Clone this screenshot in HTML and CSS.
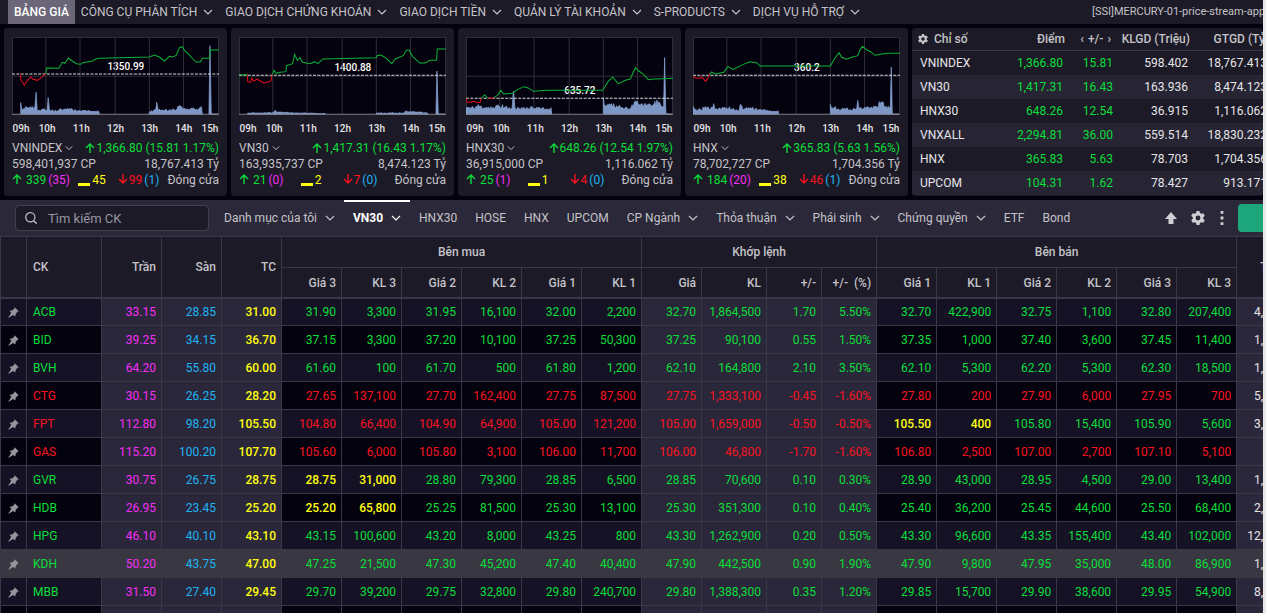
FILE: index.html
```html
<!DOCTYPE html>
<html lang="vi">
<head>
<meta charset="utf-8">
<title>Bảng giá</title>
<link rel="stylesheet" href="styles.css">
</head>
<body>
<svg class="sprite" aria-hidden="true">
  <symbol id="i-chevron" viewBox="0 0 10 10"><path d="M1 3l4 4 4-4" fill="none" stroke="currentColor" stroke-width="1.2"/></symbol>
  <symbol id="i-up" viewBox="0 0 10 10"><path d="M5 10V1M1 5l4-4 4 4" fill="none" stroke="currentColor" stroke-width="1.4"/></symbol>
  <symbol id="i-down" viewBox="0 0 10 10"><path d="M5 0v9M1 5l4 4 4-4" fill="none" stroke="currentColor" stroke-width="1.4"/></symbol>
  <symbol id="i-search" viewBox="0 0 12 12"><circle cx="5.3" cy="5.3" r="4.6" fill="none" stroke="currentColor" stroke-width="1.2"/><path d="M8.7 8.7l3 3" stroke="currentColor" stroke-width="1.3"/></symbol>
  <symbol id="i-gear" viewBox="0 0 24 24"><path fill="currentColor" fill-rule="evenodd" d="M9.5 0h5l.8 3.6 2.3 1.3L21 3.7l2.6 4.5-2.7 2.5v2.6l2.7 2.5-2.6 4.5-3.4-1.2-2.3 1.3-.8 3.6h-5l-.8-3.6-2.3-1.3L3 20.3.4 15.8l2.7-2.5v-2.6L.4 8.2 3 3.7l3.4 1.2 2.3-1.3zM12 7.800a4.200 4.200 0 1 0 0 8.400 4.200 4.200 0 0 0 0-8.400z"/></symbol>
  <symbol id="i-pin" viewBox="0 0 12 12"><path fill="currentColor" d="M7.300.3l4.400 4.400-1.200.5-2.200 2.500-.2 2.600-2.600-1.700L.7 11.800l-.4-.4L3.600 6.600 1.700 4.100l2.800-.3L6.900 1.700z"/></symbol>
  <symbol id="i-top" viewBox="0 0 12 12"><path fill="currentColor" d="M6 0l6 7H8.500v5h-5V7H0z"/></symbol>
  <symbol id="i-dots" viewBox="0 0 4 14"><path fill="currentColor" d="M.6 0h2.800v2.800H.6zM.6 5.600h2.800v2.800H.6zM.6 11.200h2.800V14H.6z"/></symbol>
</svg>

<div class="app">
  <header class="topbar">
    <nav class="menu">
      <a class="menu-item menu-active" href="#">BẢNG GIÁ</a>
      <a class="menu-item" href="#">CÔNG CỤ PHÂN TÍCH<svg class="chev"><use href="#i-chevron"/></svg></a>
      <a class="menu-item" href="#">GIAO DỊCH CHỨNG KHOÁN<svg class="chev"><use href="#i-chevron"/></svg></a>
      <a class="menu-item" href="#">GIAO DỊCH TIỀN<svg class="chev"><use href="#i-chevron"/></svg></a>
      <a class="menu-item" href="#">QUẢN LÝ TÀI KHOẢN<svg class="chev"><use href="#i-chevron"/></svg></a>
      <a class="menu-item" href="#">S-PRODUCTS<svg class="chev"><use href="#i-chevron"/></svg></a>
      <a class="menu-item" href="#">DỊCH VỤ HỖ TRỢ<svg class="chev"><use href="#i-chevron"/></svg></a>
    </nav>
    <span class="server">[SSI]MERCURY-01-price-stream-app</span>
  </header>

  <main>
    <section class="market">
      <div class="cards" id="cards"></div>
      <div class="indices">
        <table class="index-table">
          <colgroup><col class="w-name"><col class="w-point"><col class="w-change"><col class="w-vol"><col class="w-val"></colgroup>
          <thead>
            <tr><th class="left"><svg class="gear-sm"><use href="#i-gear"/></svg>Chỉ số</th><th>Điểm</th><th><span class="pager"><span>‹</span><span>+/-</span><span>›</span></span></th><th>KLGD (Triệu)</th><th>GTGD (Tỷ)</th></tr>
          </thead>
          <tbody>
            <tr><td class="left">VNINDEX</td><td class="up">1,366.80</td><td class="up">15.81</td><td>598.402</td><td>18,767.413</td></tr>
            <tr><td class="left">VN30</td><td class="up">1,417.31</td><td class="up">16.43</td><td>163.936</td><td>8,474.123</td></tr>
            <tr><td class="left">HNX30</td><td class="up">648.26</td><td class="up">12.54</td><td>36.915</td><td>1,116.062</td></tr>
            <tr><td class="left">VNXALL</td><td class="up">2,294.81</td><td class="up">36.00</td><td>559.514</td><td>18,830.232</td></tr>
            <tr><td class="left">HNX</td><td class="up">365.83</td><td class="up">5.63</td><td>78.703</td><td>1,704.356</td></tr>
            <tr><td class="left">UPCOM</td><td class="up">104.31</td><td class="up">1.62</td><td>78.427</td><td>913.171</td></tr>
          </tbody>
        </table>
      </div>
    </section>

    <section class="toolbar">
      <label class="search"><svg class="search-icon"><use href="#i-search"/></svg><input type="text" placeholder="Tìm kiếm CK" aria-label="Tìm kiếm CK"></label>
      <nav class="tabs">
        <button class="tab">Danh mục của tôi<svg class="chev"><use href="#i-chevron"/></svg></button>
        <button class="tab tab-active">VN30<svg class="chev"><use href="#i-chevron"/></svg></button>
        <button class="tab">HNX30</button>
        <button class="tab">HOSE</button>
        <button class="tab">HNX</button>
        <button class="tab">UPCOM</button>
        <button class="tab">CP Ngành<svg class="chev"><use href="#i-chevron"/></svg></button>
        <button class="tab">Thỏa thuận<svg class="chev"><use href="#i-chevron"/></svg></button>
        <button class="tab">Phái sinh<svg class="chev"><use href="#i-chevron"/></svg></button>
        <button class="tab">Chứng quyền<svg class="chev"><use href="#i-chevron"/></svg></button>
        <button class="tab">ETF</button>
        <button class="tab">Bond</button>
      </nav>
      <div class="tools">
        <button class="tool" aria-label="Lên đầu"><svg class="ic-top"><use href="#i-top"/></svg></button>
        <button class="tool" aria-label="Cài đặt"><svg class="ic-gear"><use href="#i-gear"/></svg></button>
        <button class="tool" aria-label="Thêm"><svg class="ic-dots"><use href="#i-dots"/></svg></button>
      </div>
      <button class="order" aria-label="Đặt lệnh"></button>
    </section>

    <table class="board">
      <colgroup>
        <col class="c-pin"><col class="c-code"><col span="3" class="c-60"><col span="6" class="c-60">
        <col class="c-60"><col class="c-65"><col span="2" class="c-55"><col span="6" class="c-60"><col>
      </colgroup>
      <thead>
        <tr class="h1">
          <th rowspan="2"></th><th rowspan="2" class="left">CK</th><th rowspan="2">Trần</th><th rowspan="2">Sàn</th><th rowspan="2">TC</th>
          <th colspan="6" class="group">Bên mua</th><th colspan="4" class="group">Khớp lệnh</th><th colspan="6" class="group">Bên bán</th>
          <th rowspan="2" class="total">T</th>
        </tr>
        <tr class="h2">
          <th>Giá 3</th><th>KL 3</th><th>Giá 2</th><th>KL 2</th><th>Giá 1</th><th>KL 1</th>
          <th>Giá</th><th>KL</th><th>+/-</th><th>+/-&nbsp; (%)</th>
          <th>Giá 1</th><th>KL 1</th><th>Giá 2</th><th>KL 2</th><th>Giá 3</th><th>KL 3</th>
        </tr>
      </thead>
      <tbody id="rows"></tbody>
    </table>
  </main>
</div>
<script src="board.js"></script>
</body>
</html>
```

FILE: styles.css
```css
* { box-sizing: border-box; }

:root {
  --bg: #04020e;
  --panel: #1d1a27;
  --raised: #2b2839;
  --line: #3a3746;
  --text: #c4c3c8;
  --up: #0bdf39;
  --down: #f8131f;
  --ceil: #f52df5;
  --floor: #1fb4f4;
  --ref: #ffff10;
}

body {
  margin: 0;
  height: 100vh;
  padding-right: 3px;
  overflow: hidden;
  background: #e9e9ea;
  font-family: Roboto, "Liberation Sans", sans-serif;
  font-size: 12px;
  color: var(--text);
}

button, input { font: inherit; color: inherit; }
button { border: 0; background: none; padding: 0; }
a { color: inherit; text-decoration: none; }
table { border-spacing: 0; table-layout: fixed; }
.sprite { display: none; }

.app {
  height: 100%;
  overflow: hidden;
  background: var(--bg);
}

.up { color: var(--up); }
.down { color: var(--down); }
.ceil { color: var(--ceil); }
.floor { color: var(--floor); }
.ref { color: var(--ref); }

.chev { width: 10px; height: 10px; flex: none; }

/* Top menu */
.topbar {
  display: flex;
  justify-content: space-between;
  height: 24px;
  padding-left: 8px;
  background: var(--panel);
}
.menu { display: flex; }
.menu-item {
  display: flex;
  align-items: center;
  gap: 6px;
  padding: 0 6px;
  white-space: nowrap;
}
.menu-active {
  background: #6b6778;
  color: #fff;
  font-weight: 500;
}
.server {
  flex: 0 0 171px;
  overflow: hidden;
  white-space: nowrap;
  font-size: 11px;
  line-height: 24px;
}

/* Market overview */
.market {
  display: flex;
  gap: 4px;
  padding: 4px 0 4px 4px;
}
.cards { display: flex; gap: 4px; flex: none; }
.card {
  width: 223px;
  padding: 9px 8px 8px;
  border-radius: 4px;
  background: var(--panel);
  line-height: 16px;
}
.chart { position: relative; height: 78px; background: #04020e; }
.chart svg { position: relative; display: block; width: 100%; height: 100%; }
.chart-ref {
  position: absolute;
  left: 55%;
  transform: translate(-50%, -50%);
  font-size: 10px;
  font-weight: 500;
  color: #fff;
}
.grid-line { stroke: #2f2d38; stroke-width: 3; fill: none; }
.base-line { stroke: #85848c; stroke-width: 3; }
.ref-line { stroke: #d8d8d8; stroke-width: 3; stroke-dasharray: 9 4; }
.line-up { stroke: #0db337; stroke-width: 3; fill: none; }
.line-down { stroke: #e3101c; stroke-width: 3; fill: none; }
.volume { fill: #7d97c6; stroke: #8eaadb; stroke-width: 2; }
.hours {
  display: grid;
  grid-template-columns: 9fr 17fr 17fr 17fr 17fr 17fr 9fr;
  margin: 6px 0 3px;
  font-size: 10px;
  font-weight: 500;
  text-align: center;
  color: #e4e4e6;
}
.row { display: flex; justify-content: space-between; white-space: nowrap; }
.row > span, .pick { display: flex; align-items: center; }
.pick { gap: 3px; }
.pick .chev { width: 8px; height: 8px; }
.arrow { width: 10px; height: 10px; margin-right: 1px; flex: none; }
.count { gap: 2px; }
.losers { padding-left: 4px; }
.dash { width: 12px; height: 3px; margin-top: 8px; background: var(--ref); }

/* Index list */
.indices {
  flex: 1;
  overflow: hidden;
  border-radius: 4px;
  background: var(--panel);
}
.index-table { width: 361px; color: #e6e6e8; }
.w-name { width: 97px; }
.w-point { width: 60px; }
.w-change { width: 50px; }
.w-vol { width: 75px; }
.w-val { width: 79px; }
.index-table th {
  height: 23px;
  padding: 0 4px 0 0;
  border-bottom: 1px solid var(--line);
  text-align: right;
  font-weight: 500;
  color: var(--text);
  white-space: nowrap;
}
.index-table td {
  height: 24px;
  padding: 0 6px 0 0;
  text-align: right;
}
.index-table td.left { padding-left: 8px; text-align: left; }
.index-table th.left { padding-left: 6px; text-align: left; }
.index-table tbody tr:nth-child(even) { background: #272434; }
.gear-sm { width: 10px; height: 10px; margin-right: 6px; vertical-align: -1px; }
.pager { display: inline-flex; gap: 4px; padding-right: 4px; }

/* Toolbar */
.toolbar {
  display: flex;
  align-items: center;
  height: 36px;
  padding-left: 15px;
  background: var(--raised);
}
.search {
  display: flex;
  align-items: center;
  gap: 11px;
  width: 194px;
  height: 26px;
  margin-right: 6px;
  padding: 0 9px;
  border: 1px solid #434053;
  border-radius: 4px;
  background: var(--panel);
}
.search-icon { width: 12px; height: 12px; flex: none; }
.search input {
  width: 100%;
  min-width: 0;
  padding: 0;
  border: 0;
  outline: 0;
  background: none;
  font-size: 13px;
}
.search input::placeholder { color: #9695a0; opacity: 1; }
.tabs { display: flex; align-self: stretch; }
.tab {
  display: flex;
  align-items: center;
  gap: 8px;
  padding: 0 9px;
  white-space: nowrap;
}
.tab-active {
  color: #fff;
  font-weight: 700;
  background: linear-gradient(#fff, #fff) top / 100% 2px no-repeat;
}
.tools { display: flex; align-items: center; margin-left: auto; gap: 13px; padding-right: 13px; }
.tool { display: flex; justify-content: center; color: #cfced3; }
.ic-top { width: 12px; height: 12px; }
.ic-gear { width: 14px; height: 14px; margin: 0 1px; }
.ic-dots { width: 4px; height: 14px; margin: 0 1px; }
.order {
  width: 25px;
  height: 28px;
  border-radius: 4px 0 0 4px;
  background: #1ea67b;
}

/* Price board */
.board { width: 100%; }
.c-pin { width: 27px; }
.c-code { width: 75px; }
.c-60 { width: 60px; }
.c-65 { width: 65px; }
.c-55 { width: 55px; }
.board th, .board td {
  overflow: hidden;
  padding: 0 5px 0 0;
  border-right: 1px solid var(--line);
  text-align: right;
  white-space: nowrap;
}
.board th:first-child { border-left: 1px solid var(--line); }
.board .h2 th:first-child { border-left: 0; }
.board th {
  height: 31px;
  background: var(--panel);
  border-top: 1px solid var(--line);
  font-weight: 500;
}
.board .h2 th, .board th[rowspan] { border-bottom: 1px solid var(--line); }
.board .h1 .group { padding: 0; text-align: center; }
.board .h1 th.total { padding: 0 0 0 23px; text-align: left; text-overflow: clip; }
.board td {
  height: 28px;
  border-bottom: 1px solid var(--line);
  background: #161226;
}
.board tbody tr:first-child td { border-top: 1px solid var(--line); }
.board tbody tr:nth-child(even) td { background: #04020e; }
.board th.left, .board td.left { padding-left: 6px; text-align: left; }
.board tbody tr td.shade,
.board tbody tr:nth-child(even) td.shade { background: #2b273b; }
.board tbody tr.hover td.shade,
.board tbody tr.hover:nth-child(even) td,
.board tbody tr.hover:nth-child(even) td.shade { background: #393842; border-color: #393842; }
.board td.ref { font-weight: 500; }
.board td.pin { padding: 0; border-left: 1px solid var(--line); text-align: center; color: #96959c; }
.board td:last-child { padding: 0; border-right: 0; color: #e6e6e8; }
.board th.total { border-right: 0; }
.pin svg { width: 11px; height: 11px; vertical-align: middle; }
```

FILE: board.js
```js
// Chart geometry: 618 x 234 units, three units per pixel.
const cards = [
  {
    name: 'VNINDEX', last: '1,366.80 (15.81 1.17%)', vol: '598,401,937 CP', val: '18,767.413 Tỷ',
    up: 339, ceil: 35, flat: 45, down: 99, floor: 1, ref: '1350.99', refY: 111, labelY: 91,
    red: '26,111 26,128 37,144 46,130 56,120 62,126 75,130 88,122 98,112 101,111',
    green: '101,111 103,93 140,94 150,76 158,79 168,63 180,72 192,80 205,82 212,77 240,72 250,66 260,64 410,60 425,54 440,60 455,72 470,58 480,60 490,55 500,32 508,29 516,42 528,52 540,66 550,75 562,75 568,64 590,64 592,39 618,39',
    volume: [[[26, 35], [29, 16], [60, 24], [68, 20], [72, 66], [75, 14], [105, 14], [108, 50], [112, 12], [160, 16], [200, 12], [259, 9], [261, 14]],
      [[410, 8], [428, 12], [432, 36], [436, 12], [490, 14], [500, 26], [520, 16], [566, 20], [568, 3]],
      [[588, 2], [591, 206], [595, 2], [616, 1]]]
  },
  {
    name: 'VN30', last: '1,417.31 (16.43 1.17%)', vol: '163,935,737 CP', val: '8,474.123 Tỷ',
    up: 21, ceil: 0, flat: 2, down: 7, floor: 0, ref: '1400.88', refY: 115, labelY: 94,
    red: '25,113 26,134 34,136 38,124 44,132 54,126 64,132 74,138 90,134 96,130 98,115',
    green: '0,113 26,113 M100,113 104,100 112,109 124,106 140,104 142,86 160,80 166,52 174,70 182,62 190,76 212,80 226,74 236,80 250,66 410,62 412,56 424,54 440,64 456,80 466,66 490,56 500,40 508,40 518,58 540,78 556,78 570,70 590,70 592,36 618,36',
    volume: [[[26, 4], [100, 5], [108, 12], [113, 6], [259, 2]], [[410, 4], [494, 4], [498, 9], [530, 7], [566, 4]], [[588, 1], [591, 130], [595, 1], [616, 1]]]
  },
  {
    name: 'HNX30', last: '648.26 (12.54 1.97%)', vol: '36,915,000 CP', val: '1,116.062 Tỷ',
    up: 25, ceil: 1, flat: 1, down: 4, floor: 0, ref: '635.72', refY: 184, labelY: 163,
    red: '0,184 3,196 14,196 24,193 34,197 42,196 46,183 M66,184 84,183',
    green: '46,183 56,173 64,184 M84,181 94,175 104,160 112,171 140,169 150,160 172,149 184,152 202,163 240,160 408,160 424,134 438,120 454,140 476,130 490,126 506,92 516,102 530,112 544,128 560,126 590,125 618,124',
    volume: [[[0, 20], [30, 24], [60, 22], [100, 24], [138, 22], [142, 70], [146, 18], [200, 20], [256, 16]], [[410, 50], [414, 26], [450, 26], [490, 18], [508, 38], [540, 28], [575, 38], [590, 22], [593, 170], [597, 2], [616, 1]]]
  },
  {
    name: 'HNX', last: '365.83 (5.63 1.56%)', vol: '78,702,727 CP', val: '1,704.356 Tỷ',
    up: 184, ceil: 20, flat: 38, down: 46, floor: 1, ref: '360.2', refY: 115, labelY: 94,
    red: '0,116 8,124 20,124 26,120 38,133 46,120 50,112',
    green: '50,112 56,105 66,111 92,106 104,89 120,97 150,82 170,74 190,77 200,87 410,87 422,66 436,47 444,61 458,67 476,60 492,56 498,40 506,28 520,40 530,44 544,55 560,52 580,49 618,49',
    volume: [[[0, 24], [6, 14], [56, 22], [62, 32], [68, 16], [100, 20], [138, 14], [142, 30], [148, 18], [200, 16], [230, 10], [256, 9]], [[410, 30], [416, 20], [470, 14], [486, 16], [492, 42], [498, 18], [550, 22], [556, 38], [586, 18], [589, 22], [592, 142], [595, 1], [616, 1]]]
  }
];

const hours = ['09h', '10h', '11h', '12h', '13h', '14h', '15h'];
const BASE = 232;
const points = s => 'M' + s;

function volumePath(segments) {
  return segments.map((seg, s) => {
    let d = `M${seg[0][0]},${BASE}`;
    for (let i = 0; i < seg.length - 1; i++) {
      const [x0, h0] = seg[i], [x1, h1] = seg[i + 1];
      for (let x = x0; x < x1; x += 3) {
        const n = Math.sin(x * 12.9898 + s * 78.2) * 43758.5453;
        const h = h0 + (h1 - h0) * (x - x0) / (x1 - x0);
        const k = x === x0 ? 1 : 0.65 + 0.6 * (n - Math.floor(n));
        d += ` L${x},${Math.round(BASE - h * k)}`;
      }
    }
    return d + ` L${seg[seg.length - 1][0]},${BASE}Z`;
  }).join(' ');
}

const icon = (name, cls) => `<svg class="${cls}"><use href="#i-${name}"/></svg>`;

document.getElementById('cards').innerHTML = cards.map(c => `
  <article class="card">
    <div class="chart">
      <span class="chart-ref" style="top:${Math.round(c.labelY / 3)}px">${c.ref}</span>
      <svg viewBox="0 0 618 234" preserveAspectRatio="none">
        <path class="grid-line" d="M0 1.500H618M0 118H618M1.500 0V232M101 0V232M203 0V232M308 0V232M410 0V232M512 0V232M616.500 0V232"/>
        <path class="volume" d="${volumePath(c.volume)}"/>
        <path class="base-line" d="M0 ${BASE}H618"/>
        <path class="ref-line" d="M0 ${c.refY}H618"/>
        <path class="line-down" d="${points(c.red)}"/>
        <path class="line-up" d="${points(c.green)}"/>
      </svg>
    </div>
    <div class="hours">${hours.map(h => `<span>${h}</span>`).join('')}</div>
    <div class="row"><button class="pick">${c.name}${icon('chevron', 'chev')}</button><span class="up">${icon('up', 'arrow')}${c.last}</span></div>
    <div class="row"><span>${c.vol}</span><span>${c.val}</span></div>
    <div class="row">
      <span class="count"><span class="up">${icon('up', 'arrow')} ${c.up}</span><span class="ceil">(${c.ceil})</span></span>
      <span class="count ref"><i class="dash"></i>${c.flat}</span>
      <span class="count losers"><span class="down">${icon('down', 'arrow')}${c.down}</span><span class="floor">(${c.floor})</span></span>
      <span>Đóng cửa</span>
    </div>
  </article>`).join('');

// Code, ceiling, floor, reference, 3 bids, match, 3 offers, total.
// Suffix "=" marks a level at the reference price, "+" a level above it.
const rows = [
  ['up', 'ACB 33.15 28.85 31.00 31.90 3,300 31.95 16,100 32.00 2,200 32.70 1,864,500 1.70 5.50% 32.70 422,900 32.75 1,100 32.80 207,400 4,'],
  ['up', 'BID 39.25 34.15 36.70 37.15 3,300 37.20 10,100 37.25 50,300 37.25 90,100 0.55 1.50% 37.35 1,000 37.40 3,600 37.45 11,400 1,'],
  ['up', 'BVH 64.20 55.80 60.00 61.60 100 61.70 500 61.80 1,200 62.10 164,800 2.10 3.50% 62.10 5,300 62.20 5,300 62.30 18,500 1,'],
  ['down', 'CTG 30.15 26.25 28.20 27.65 137,100 27.70 162,400 27.75 87,500 27.75 1,333,100 -0.45 -1.60% 27.80 200 27.90 6,000 27.95 700 5,'],
  ['down', 'FPT 112.80 98.20 105.50 104.80 66,400 104.90 64,900 105.00 121,200 105.00 1,659,000 -0.50 -0.50% 105.50= 400= 105.80+ 15,400+ 105.90+ 5,600+ 3,'],
  ['down', 'GAS 115.20 100.20 107.70 105.60 6,000 105.80 3,100 106.00 11,700 106.00 46,800 -1.70 -1.60% 106.80 2,500 107.00 2,700 107.10 5,100'],
  ['up', 'GVR 30.75 26.75 28.75 28.75= 31,000= 28.80 79,300 28.85 6,500 28.85 70,600 0.10 0.30% 28.90 43,000 28.95 4,500 29.00 13,400 1,'],
  ['up', 'HDB 26.95 23.45 25.20 25.20= 65,800= 25.25 81,500 25.30 13,100 25.30 351,300 0.10 0.40% 25.40 36,200 25.45 44,600 25.50 68,400 2,'],
  ['up', 'HPG 46.10 40.10 43.10 43.15 100,600 43.20 8,000 43.25 800 43.30 1,262,900 0.20 0.50% 43.30 96,600 43.35 155,400 43.40 102,000 12,'],
  ['up', 'KDH 50.20 43.75 47.00 47.25 21,500 47.30 45,200 47.40 40,400 47.90 442,500 0.90 1.90% 47.90 9,800 47.95 35,000 48.00 86,900 1,'],
  ['up', 'MBB 31.50 27.40 29.45 29.70 39,200 29.75 32,800 29.80 240,700 29.80 1,388,300 0.35 1.20% 29.85 15,700 29.90 38,600 29.95 54,900 8,'],
  ['up', '']
];

const fixed = { 1: 'ceil', 2: 'floor', 3: 'ref' };
const shaded = i => (i >= 1 && i <= 3) || (i >= 10 && i <= 13) || i === 20;

document.getElementById('rows').innerHTML = rows.map(([trend, text]) => {
  const values = text.split(' ');
  let html = `<td class="pin">${text ? icon('pin', '') : ''}</td>`;
  for (let i = 0; i < 21; i++) {
    const raw = values[i] || '';
    const own = raw.endsWith('=') ? 'ref' : raw.endsWith('+') ? 'up' : trend;
    const cls = [i === 20 ? '' : fixed[i] || own, i === 0 ? 'left' : '', shaded(i) ? 'shade' : ''].filter(Boolean).join(' ');
    html += `<td class="${cls}">${raw.replace(/[=+]$/, '')}</td>`;
  }
  return `<tr${values[0] === 'KDH' ? ' class="hover"' : ''}>${html}</tr>`;
}).join('');
```
